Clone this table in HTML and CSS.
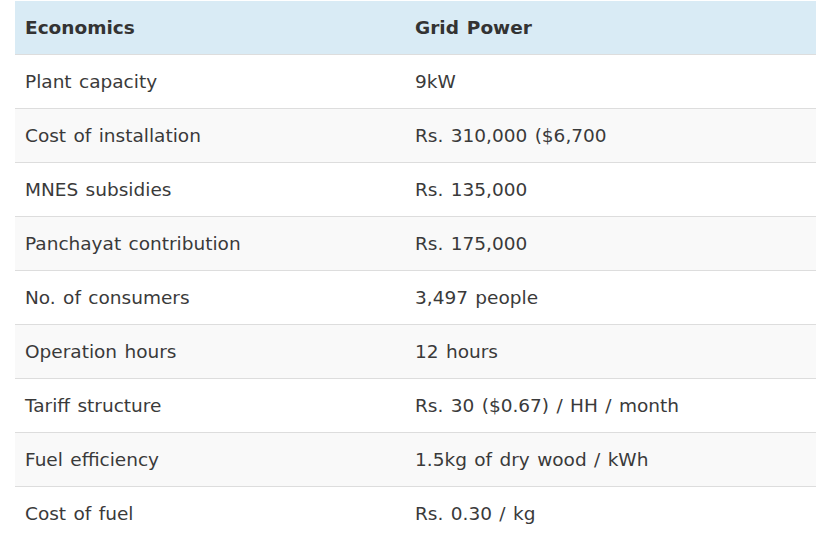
FILE: index.html
```html
<!DOCTYPE html>
<html>
<head>
<meta charset="utf-8">
<link rel="stylesheet" href="styles.css">
</head>
<body>
<table class="econ">
  <thead>
    <tr><th class="c1">Economics</th><th>Grid Power</th></tr>
  </thead>
  <tbody>
    <tr><td>Plant capacity</td><td>9kW</td></tr>
    <tr><td>Cost of installation</td><td>Rs. 310,000 ($6,700</td></tr>
    <tr><td>MNES subsidies</td><td>Rs. 135,000</td></tr>
    <tr><td>Panchayat contribution</td><td>Rs. 175,000</td></tr>
    <tr><td>No. of consumers</td><td>3,497 people</td></tr>
    <tr><td>Operation hours</td><td>12 hours</td></tr>
    <tr><td>Tariff structure</td><td>Rs. 30 ($0.67) / HH / month</td></tr>
    <tr><td>Fuel efficiency</td><td>1.5kg of dry wood / kWh</td></tr>
    <tr><td>Cost of fuel</td><td>Rs. 0.30 / kg</td></tr>
  </tbody>
</table>
</body>
</html>
```
FILE: styles.css
```css
html, body {
  margin: 0;
  padding: 0;
  background: #fff;
}
.econ {
  margin: 1px 0 0 15px;
  width: 820px;
  border-collapse: collapse;
  font-family: "DejaVu Sans", Verdana, sans-serif;
  font-size: 18.5px;
  word-spacing: 1.5px;
  color: #3a3a3a;
}
.econ th, .econ td {
  text-align: left;
  padding: 0 10px;
  height: 53px;
  box-sizing: border-box;
  vertical-align: middle;
}
.econ th {
  background: #d9ebf5;
  font-weight: bold;
  color: #333;
}
.econ .c1 {
  width: 390px;
}
.econ td {
  border-top: 1px solid #dddddd;
  height: 54px;
}
.econ tbody tr:nth-child(even) td {
  background: #f9f9f9;
}
```
